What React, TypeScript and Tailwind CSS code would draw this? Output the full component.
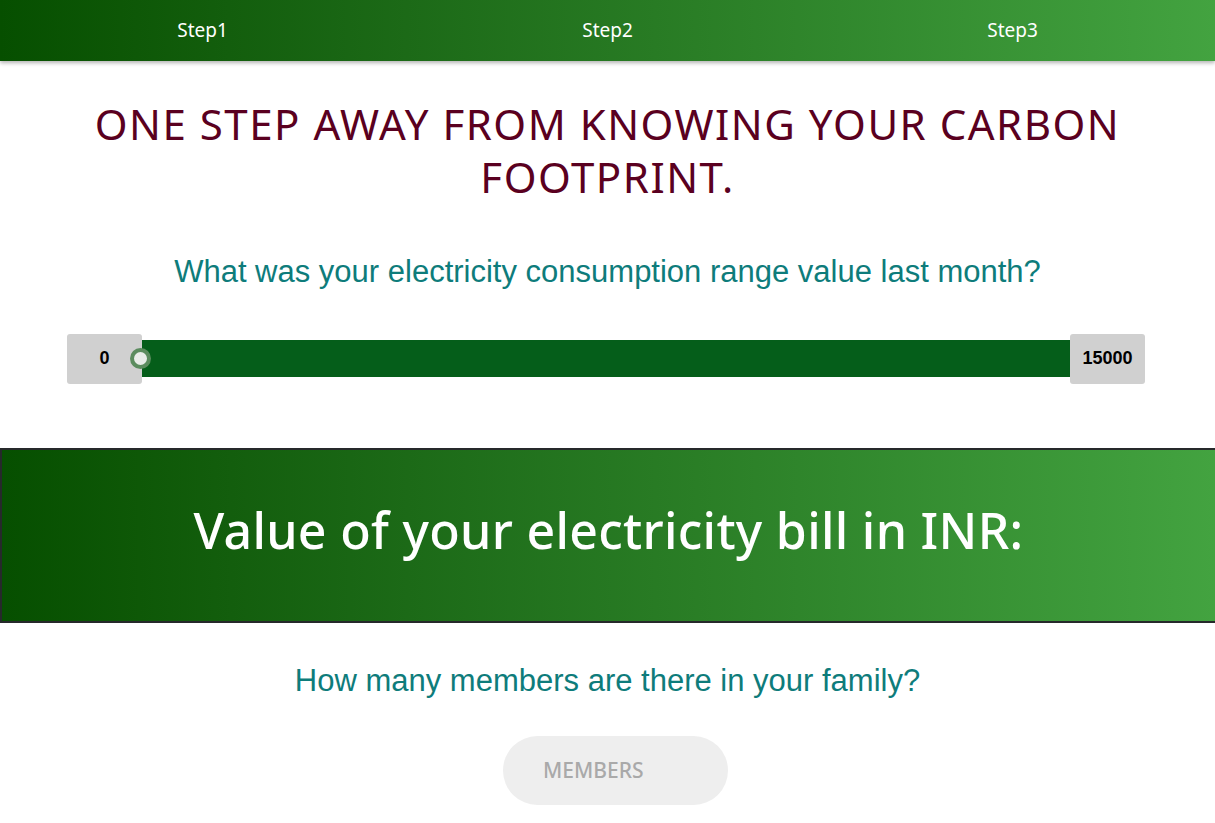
import React from "react";

export default function App() {
  const poppins = { fontFamily: '"Noto Sans", "Open Sans", sans-serif' };
  const arial = { fontFamily: '"Liberation Sans", Arial, sans-serif' };
  return (
    <div className="w-[1215px] min-h-[823px] bg-white overflow-hidden" style={poppins}>
      <nav className="h-[61px] grid grid-cols-3 items-center bg-gradient-to-r from-[#064f00] to-[#43a340] shadow-[0_2px_4px_rgba(0,0,0,0.3)] relative z-10">
        <div className="text-center text-white text-[19px]">Step1</div>
        <div className="text-center text-white text-[19px]">Step2</div>
        <div className="text-center text-white text-[19px]">Step3</div>
      </nav>
      <h1 className="mt-[36px] px-[80px] text-center text-[42px] leading-[53px] tracking-[1.5px] text-[#5a0020] font-normal">
        ONE STEP AWAY FROM KNOWING YOUR CARBON FOOTPRINT.
      </h1>
      <p className="mt-[46px] text-center text-[31px] text-[#0e7c7b]" style={arial}>
        What was your electricity consumption range value last month?
      </p>
      <div className="mt-[38px] flex items-center pl-[67px] pr-[70px]" style={arial}>
        <div className="w-[75px] h-[50px] bg-[#d0d0d0] rounded-[3px] flex items-center justify-center text-[18px] font-bold text-black">0</div>
        <div className="relative flex-1 h-[37px] bg-[#055e1a]">
          <div className="absolute left-[-12px] top-[8px] w-[21px] h-[21px] rounded-full bg-[#e8ece8] border-[4px] border-[#5b8c5e]" />
        </div>
        <div className="w-[75px] h-[50px] bg-[#d0d0d0] rounded-[3px] flex items-center justify-center text-[18px] font-bold text-black">15000</div>
      </div>
      <div className="mt-[64px] h-[175px] border-y-2 border-l-2 border-[#26292b] bg-gradient-to-r from-[#064f00] to-[#43a340] flex items-center justify-center">
        <h2 className="text-white text-[50px] font-medium tracking-[0.3px] -mt-[10px]">Value of your electricity bill in INR:</h2>
      </div>
      <p className="mt-[35px] text-center text-[31px] text-[#0e7c7b]" style={arial}>
        How many members are there in your family?
      </p>
      <div className="mt-[32px] flex justify-center pl-[16px]">
        <div className="w-[225px] h-[69px] rounded-full bg-[#eeeeee] flex items-center pl-[40px] text-[21px] font-medium text-[#a9a9a9]">
          MEMBERS
        </div>
      </div>
    </div>
  );
}
